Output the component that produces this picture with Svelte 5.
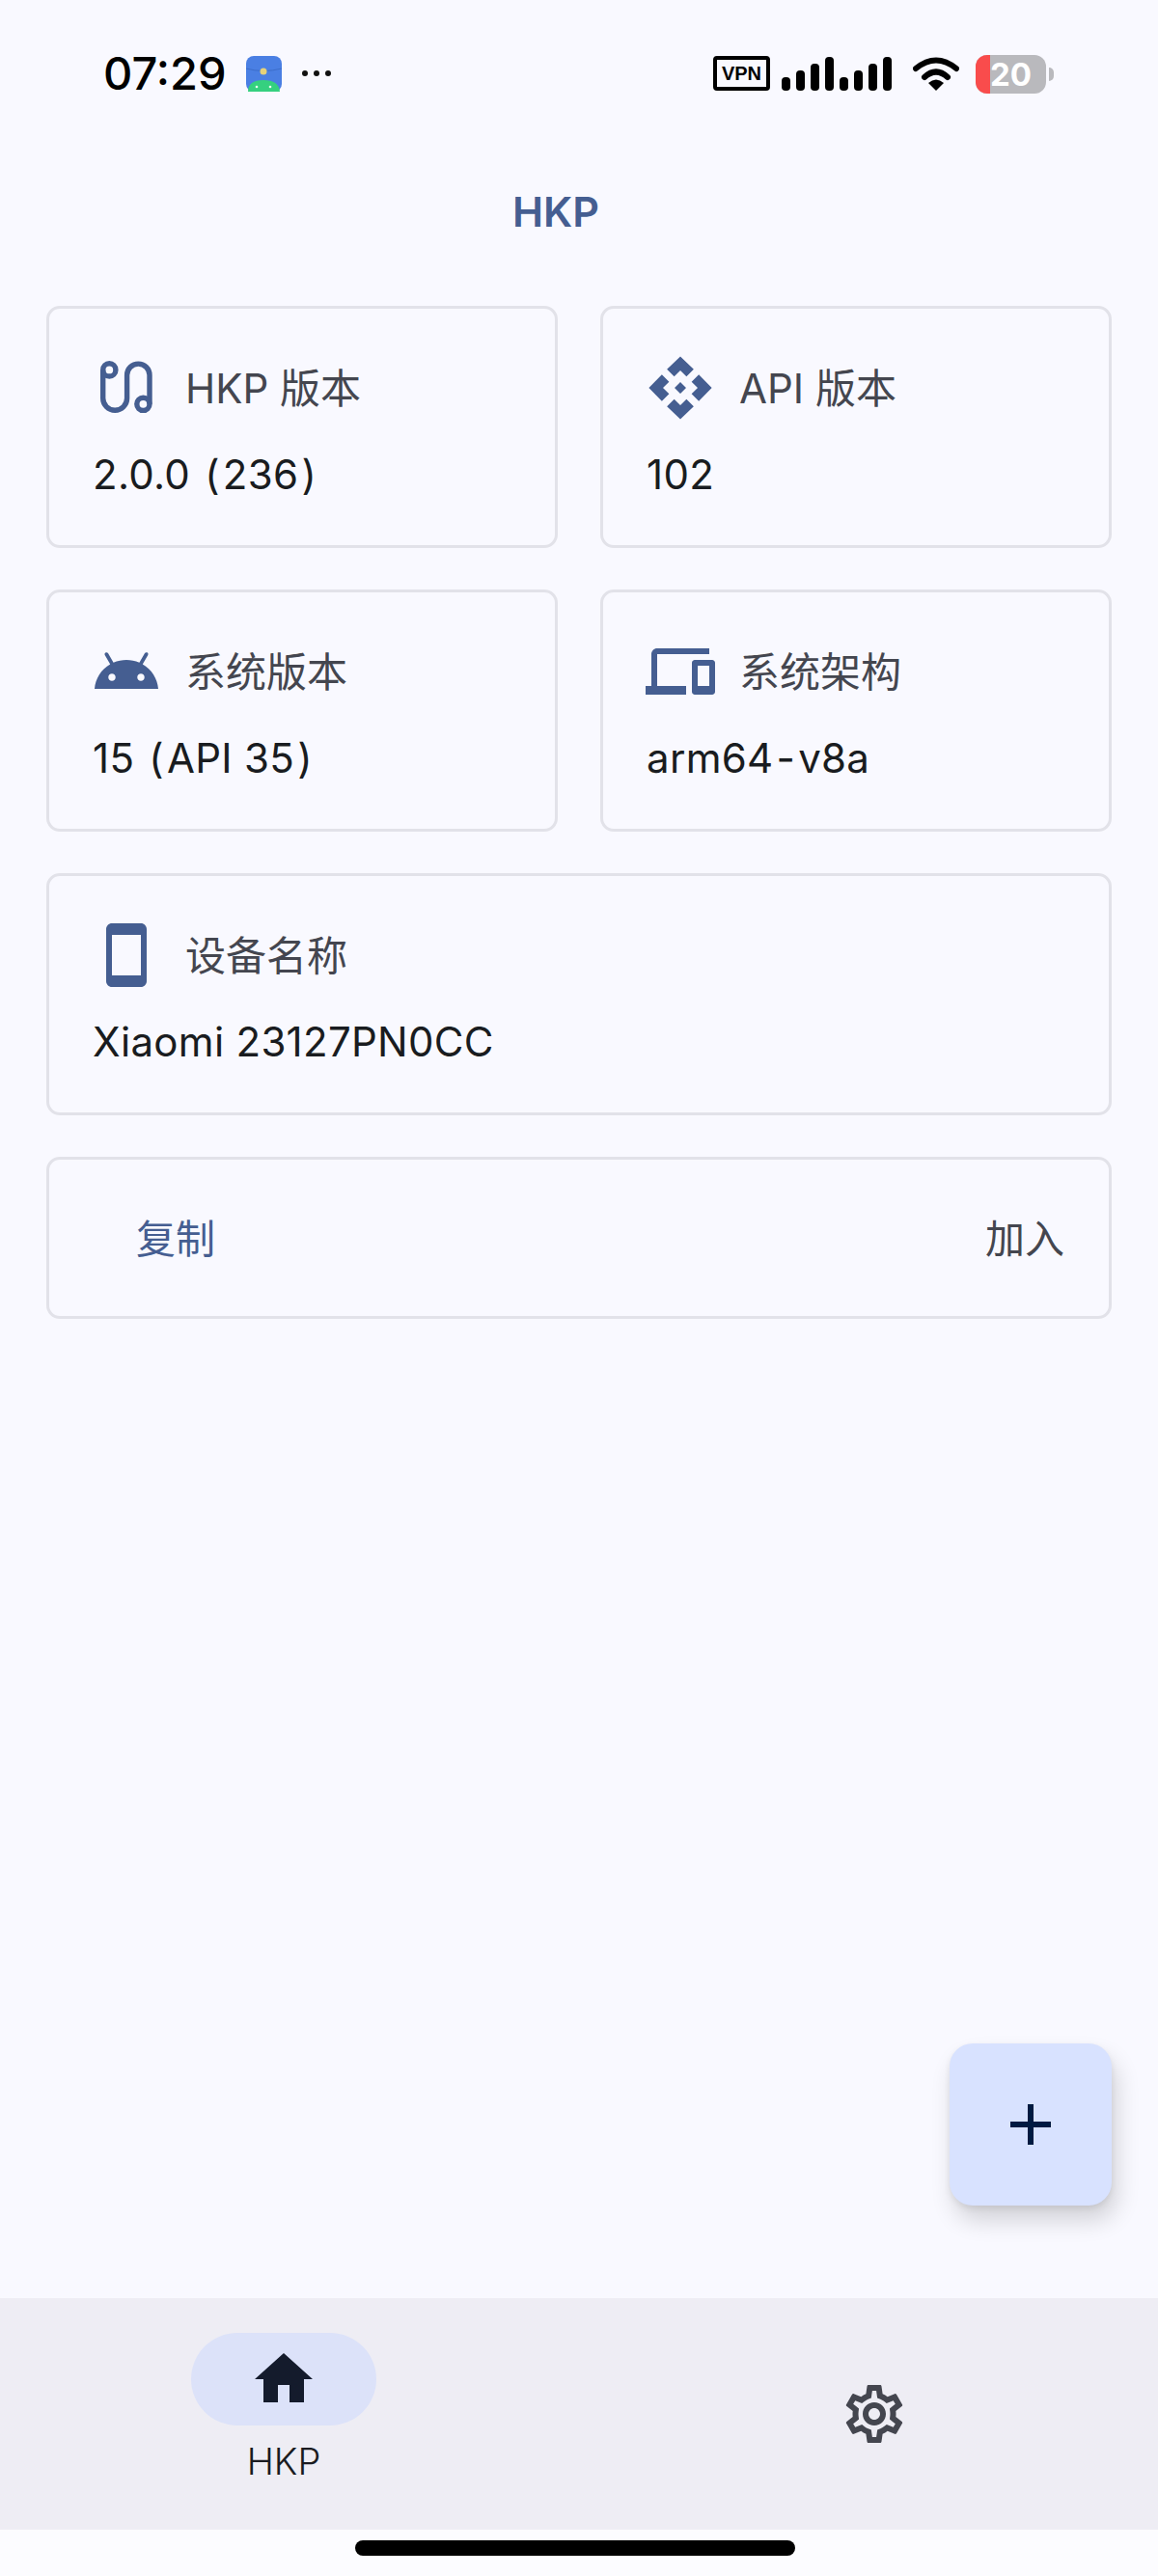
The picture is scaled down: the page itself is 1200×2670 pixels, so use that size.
<script>
  const home = 'M10 20v-6h4v6h5v-8h3L12 3 2 12h3v8z';
  const gear = 'M19.43 12.98c.04-.32.07-.64.07-.98 0-.34-.03-.66-.07-.98l2.11-1.65c.19-.15.24-.42.12-.64l-2-3.46c-.09-.16-.26-.25-.44-.25-.06 0-.12.01-.17.03l-2.49 1c-.52-.4-1.08-.73-1.69-.98l-.38-2.65C14.46 2.18 14.25 2 14 2h-4c-.25 0-.46.18-.49.42l-.38 2.65c-.61.25-1.17.59-1.69.98l-2.49-1c-.06-.02-.12-.03-.18-.03-.17 0-.34.09-.43.25l-2 3.46c-.13.22-.07.49.12.64l2.11 1.65c-.04.32-.07.65-.07.98 0 .33.03.66.07.98l-2.11 1.65c-.19.15-.24.42-.12.64l2 3.46c.09.16.26.25.44.25.06 0 .12-.01.17-.03l2.49-1c.52.4 1.08.73 1.69.98l.38 2.65c.03.24.24.42.49.42h4c.25 0 .46-.18.49-.42l.38-2.65c.61-.25 1.17-.59 1.69-.98l2.49 1c.06.02.12.03.18.03.17 0 .34-.09.43-.25l2-3.46c.12-.22.07-.49-.12-.64l-2.11-1.65zm-1.98-1.71c.04.31.05.52.05.73 0 .21-.02.43-.05.73l-.14 1.13.89.7 1.08.84-.7 1.21-1.27-.51-1.04-.42-.9.68c-.43.32-.84.56-1.25.73l-1.06.43-.16 1.13-.2 1.35h-1.4l-.19-1.35-.16-1.13-1.06-.43c-.43-.18-.83-.41-1.23-.71l-.91-.7-1.06.43-1.27.51-.7-1.21 1.08-.84.89-.7-.14-1.13c-.03-.31-.05-.54-.05-.74s.02-.43.05-.73l.14-1.13-.89-.7-1.08-.84.7-1.21 1.27.51 1.04.42.9-.68c.43-.32.84-.56 1.25-.73l1.06-.43.16-1.13.2-1.35h1.39l.19 1.35.16 1.13 1.06.43c.43.18.83.41 1.23.71l.91.7 1.06-.43 1.27-.51.7 1.21-1.07.85-.89.7.14 1.13zM12 8c-2.21 0-4 1.79-4 4s1.79 4 4 4 4-1.79 4-4-1.79-4-4-4zm0 6c-1.1 0-2-.9-2-2s.9-2 2-2 2 .9 2 2-.9 2-2 2z';

  const cards = [
    {
      label: 'HKP 版本',
      value: '2.0.0 (236)',
      route: true
    },
    {
      label: 'API 版本',
      value: '102',
      icon: 'M14 12l-2 2-2-2 2-2 2 2zM12 6l2.12 2.12 2.5-2.5L12 1.13 7.38 5.62l2.5 2.5L12 6zM6 12l2.12-2.12-2.5-2.5L1.13 12l4.49 4.62 2.5-2.5L6 12zM18 12l-2.12 2.12 2.5 2.5L22.87 12l-4.49-4.62-2.5 2.5L18 12zM12 18l-2.12-2.12-2.5 2.5L12 22.87l4.62-4.49-2.5-2.5L12 18z'
    },
    {
      label: '系统版本',
      value: '15 (API 35)',
      icon: 'M17.6 9.48l1.84-3.18c.16-.31.04-.69-.26-.85-.29-.15-.65-.06-.83.22l-1.88 3.24c-2.86-1.21-6.08-1.21-8.94 0L5.65 5.67c-.19-.29-.58-.38-.87-.2-.28.18-.37.54-.22.83L6.4 9.48C3.3 11.25 1.28 14.44 1 18h22c-.28-3.56-2.3-6.75-5.4-8.52zM7 15.25c-.69 0-1.25-.56-1.25-1.25s.56-1.25 1.25-1.25 1.25.56 1.25 1.25-.56 1.25-1.25 1.25zm10 0c-.69 0-1.25-.56-1.25-1.25s.56-1.25 1.25-1.25 1.25.56 1.25 1.25-.56 1.25-1.25 1.25z'
    },
    {
      label: '系统架构',
      value: 'arm64-v8a',
      icon: 'M4 6h18V4H4c-1.1 0-2 .9-2 2v11H0v3h14v-3H4V6zm19 2h-6c-.55 0-1 .45-1 1v10c0 .55.45 1 1 1h6c.55 0 1-.45 1-1V9c0-.55-.45-1-1-1zm-1 9h-4v-7h4v7z'
    },
    {
      label: '设备名称',
      value: 'Xiaomi 23127PN0CC',
      wide: true,
      icon: 'M17 1.01L7 1c-1.1 0-2 .9-2 2v18c0 1.1.9 2 2 2h10c1.1 0 2-.9 2-2V3c0-1.1-.9-1.99-2-1.99zM17 19H7V5h10v14z'
    }
  ];

  // the device font draws brackets and hyphens wider than Inter does
  const parts = (value) => value.split(/([()-])/).filter(Boolean);
  const isMark = (part) => /^[()-]$/.test(part);
</script>

<div class="page">
  <header class="status">
    <span class="time">07:29</span>
    <svg class="app-icon" viewBox="0 0 37 37">
      <rect width="37" height="37" rx="8" fill="#4a7fe3" />
      <path d="M0 13q18 5 37 0" fill="none" stroke="#3c6dc9" stroke-width="1" />
      <circle cx="18" cy="16" r="3.5" fill="#e6d27a" />
      <path d="M2 37q0-12 16-12t17 12z" fill="#35d07f" />
      <circle cx="11" cy="32" r="1.3" fill="#e8fff0" />
      <circle cx="25" cy="32" r="1.3" fill="#e8fff0" />
    </svg>
    <div class="dots"><i></i><i></i><i></i></div>

    <div class="status-right">
      <span class="vpn">VPN</span>
      <svg class="signal" viewBox="0 0 114 36">
        {#each [[0, 21], [15, 14], [30, 7], [45, 0], [60, 21], [75, 14], [90, 7], [105, 0]] as b}
          <rect x={b[0]} y={b[1] + 1} width="9" height={35 - b[1]} rx="4" />
        {/each}
      </svg>
      <svg class="wifi" viewBox="0 0 48 36">
        <path d="M3 13Q24-4 45 13" fill="none" stroke="#000" stroke-width="6" stroke-linecap="round" />
        <path d="M12 22Q24 11 36 22" fill="none" stroke="#000" stroke-width="6" stroke-linecap="round" />
        <path d="M16 28Q24 21 32 28L24 36z" />
      </svg>
      <div class="battery">
        <div class="battery-low"></div>
        <span>20</span>
      </div>
      <div class="battery-nub"></div>
    </div>
  </header>

  <h1 class="title">HKP</h1>

  <main class="grid">
    {#each cards as card}
      <section class="card" class:wide={card.wide}>
        <div class="card-head">
          {#if card.route}
            <svg class="icon route" viewBox="0 0 24 24">
              <path d="M3.9 5.8V15.6a4.15 4.15 0 0 0 8.3 0V7.6a3.9 3.9 0 0 1 7.8 0V17.6" />
              <circle cx="6.1" cy="5.8" r="2.2" />
              <circle cx="17.8" cy="17.6" r="2.2" />
            </svg>
          {:else}
            <svg class="icon" viewBox="0 0 24 24"><path d={card.icon} /></svg>
          {/if}
          <span class="label">{card.label}</span>
        </div>
        <div class="value">
          {#each parts(card.value) as part}
            {#if isMark(part)}<span class="mark">{part}</span>{:else}{part}{/if}
          {/each}
        </div>
      </section>
    {/each}

    <section class="card wide actions">
      <span class="copy">复制</span>
      <span class="join">加入</span>
    </section>
  </main>

  <button class="fab" aria-label="add">
    <svg viewBox="0 0 24 24"><path d="M19 13h-6v6h-2v-6H5v-2h6V5h2v6h6v2z" /></svg>
  </button>

  <nav class="nav">
    <div class="nav-item">
      <div class="pill">
        <svg viewBox="0 0 24 24"><path d={home} /></svg>
      </div>
      <span class="nav-label">HKP</span>
    </div>
    <svg class="gear" viewBox="0 0 24 24"><path d={gear} /></svg>
  </nav>

  <div class="gesture"><div class="handle"></div></div>
</div>

<style>
  :global(body) {
    margin: 0;
    background: #f9f9ff;
  }

  .page {
    position: relative;
    height: 2670px;
    display: flex;
    flex-direction: column;
    font-family: Inter, "Noto Sans CJK SC", sans-serif;
    background: #f9f9ff;
    color: #191c20;
    overflow: hidden;
  }

  /* status bar */
  .status {
    height: 153px;
    box-sizing: border-box;
    padding: 56px 0 0 107px;
    display: flex;
    align-items: flex-start;
  }

  .time {
    font-size: 47px;
    line-height: 40px;
    font-weight: 500;
    color: #000;
  }

  .app-icon {
    width: 37px;
    height: 37px;
    margin: 2px 0 0 20px;
  }

  .dots {
    display: flex;
    gap: 6px;
    margin: 17px 0 0 21px;
  }

  .dots i {
    width: 6px;
    height: 6px;
    border-radius: 50%;
    background: #111;
  }

  .status-right {
    margin-left: auto;
    margin-right: 108px;
    display: flex;
    align-items: flex-start;
  }

  .vpn {
    width: 59px;
    height: 36px;
    margin-top: 2px;
    box-sizing: border-box;
    border: 4px solid #000;
    border-radius: 4px;
    font: 700 20px/28px "Liberation Sans", sans-serif;
    text-align: center;
    color: #000;
  }

  .signal {
    width: 114px;
    height: 36px;
    margin: 2px 0 0 12px;
  }

  .wifi {
    width: 48px;
    height: 36px;
    margin: 2px 0 0 22px;
  }

  .battery {
    position: relative;
    width: 73px;
    height: 40px;
    margin: 1px 0 0 17px;
    border-radius: 12px;
    background: #b9b9bd;
    overflow: hidden;
    text-align: center;
  }

  .battery-low {
    position: absolute;
    left: 0;
    top: 0;
    bottom: 0;
    width: 15px;
    background: #f94c4c;
  }

  .battery span {
    position: relative;
    font-size: 33px;
    line-height: 40px;
    font-weight: 700;
    color: #fff;
  }

  .battery-nub {
    width: 5px;
    height: 14px;
    margin: 14px 0 0 3px;
    border-radius: 0 6px 6px 0;
    background: #b9b9bd;
  }

  .title {
    margin: 0;
    height: 132px;
    padding-left: 531px;
    font-size: 43px;
    line-height: 132px;
    font-weight: 600;
    color: #455e91;
  }

  /* cards */
  .grid {
    flex: 1;
    box-sizing: border-box;
    padding: 32px 48px 0;
    display: grid;
    grid-template-columns: 1fr 1fr;
    grid-auto-rows: min-content;
    gap: 43px 44px;
  }

  .card {
    box-sizing: border-box;
    height: 251px;
    padding: 47px 44px 0;
    border: 3px solid #e2e2e9;
    border-radius: 14px;
  }

  .wide {
    grid-column: 1 / 3;
  }

  .card-head {
    display: flex;
    align-items: center;
    gap: 24px;
  }

  .icon {
    width: 72px;
    height: 72px;
    margin-top: -1px;
    fill: #455e91;
    flex: none;
  }

  .route {
    fill: none;
    stroke: #455e91;
    stroke-width: 1.8;
  }

  .label {
    margin: 0 0 7px 1px;
    font-size: 42px;
    color: #44464f;
  }

  .value {
    margin: 27px 0 0 1px;
    font-size: 42px;
    line-height: 54px;
    letter-spacing: 0.3px;
    color: #191c20;
  }

  .mark {
    padding: 0 3px;
  }

  .actions {
    height: 168px;
    padding: 0 46px 0 90px;
    display: flex;
    align-items: center;
    justify-content: space-between;
    font-size: 41px;
  }

  .actions span {
    margin-bottom: 5px;
  }

  .copy {
    color: #455e91;
  }

  .join {
    color: #44464f;
  }

  .fab {
    position: absolute;
    right: 48px;
    top: 2118px;
    width: 168px;
    height: 168px;
    padding: 0;
    border: none;
    border-radius: 24px;
    background: #d8e2ff;
    box-shadow: 5px 15px 24px rgba(0, 0, 0, 0.16), 0 3px 6px rgba(0, 0, 0, 0.08);
    display: flex;
    align-items: center;
    justify-content: center;
  }

  .fab svg {
    width: 72px;
    height: 72px;
    fill: #001a41;
  }

  /* bottom navigation */
  .nav {
    height: 240px;
    box-sizing: border-box;
    padding: 36px 0 0 198px;
    background: #eeedf4;
    display: flex;
    align-items: flex-start;
  }

  .nav-item {
    width: 192px;
    display: flex;
    flex-direction: column;
    align-items: center;
  }

  .pill {
    width: 192px;
    height: 96px;
    border-radius: 48px;
    background: #dce2f9;
    display: flex;
    align-items: center;
    justify-content: center;
  }

  .pill svg {
    width: 72px;
    height: 72px;
    fill: #141b2c;
  }

  .nav-label {
    margin-top: 16px;
    font-size: 38px;
    line-height: 42px;
    font-weight: 300;
    color: #1a1b20;
  }

  .gear {
    width: 72px;
    height: 72px;
    margin: 48px 0 0 480px;
    fill: #44464f;
  }

  .gesture {
    height: 48px;
    background: #fcfcff;
    padding-left: 368px;
  }

  .handle {
    width: 456px;
    height: 16px;
    position: relative;
    top: 11px;
    border-radius: 8px;
    background: #000;
  }
</style>
